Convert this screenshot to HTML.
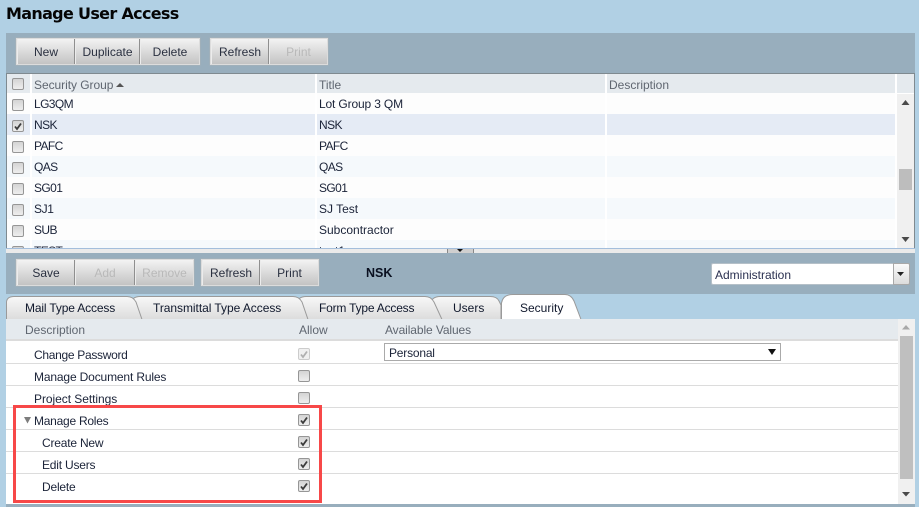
<!DOCTYPE html>
<html><head><meta charset="utf-8">
<style>
html,body{margin:0;padding:0}
body{width:919px;height:507px;overflow:hidden;background:#b1d0e4;position:relative;font-family:"Liberation Sans",sans-serif;font-size:12px;color:#1b2338}
.a{position:absolute}
.t{position:absolute;white-space:nowrap;line-height:14px}
.c{letter-spacing:-.6px}
.l{letter-spacing:-.2px}
.h{color:#5f6670}
.btn{position:absolute;height:25px;top:0;background:linear-gradient(#f3f3f3,#c3c3c3);border-left:1px solid #ececec;box-sizing:border-box;text-align:center;line-height:26px;color:#2a3040}
.dis{color:#b9b9b9}
.grp{position:absolute;background:#8f8f8f;padding:0;height:27px;border:1px solid #dcdcdc;box-sizing:border-box;box-shadow:0 0 0 .5px #a8b2b8}
.cb{position:absolute;width:12px;height:12px;box-sizing:border-box;border:1px solid #969696;border-radius:2px;background:linear-gradient(#d4d4d4,#eeeeee)}
.cb svg{position:absolute;left:0;top:0}
.sep{position:absolute;left:6px;width:892px;height:1px;background:#dcdcdc}
</style></head><body>
<div class="t" style="left:6px;top:5px;font:bold 16px/18px 'DejaVu Sans',sans-serif;letter-spacing:-.68px;color:#050505">Manage User Access</div>

<div class="a" style="left:6px;top:33px;width:909px;height:40px;background:#98aebd"></div>
<div class="grp" style="left:16px;top:38px;width:184px"><div class="btn" style="left:0;width:57px">New</div><div class="btn" style="left:58px;width:64px">Duplicate</div><div class="btn" style="left:123px;width:59px">Delete</div></div>
<div class="grp" style="left:210px;top:38px;width:118px"><div class="btn" style="left:0;width:57px">Refresh</div><div class="btn dis" style="left:58px;width:58px">Print</div></div>

<!-- grid -->
<div class="a" style="left:6px;top:73px;width:909px;height:176px;background:#fff;border-top:1px solid #7f8a90;border-left:1px solid #7f8a90;border-right:1px solid #7f8a90;box-sizing:border-box;overflow:hidden">
<div class="a" style="left:0;top:0;width:23px;height:19px;background:#e5eaee"></div>
<div class="a" style="left:25px;top:0;width:283px;height:19px;background:#e5eaee"></div>
<div class="a" style="left:310px;top:0;width:288px;height:19px;background:#e5eaee"></div>
<div class="a" style="left:600px;top:0;width:288px;height:19px;background:#e5eaee"></div>
<div class="a" style="left:890px;top:0;width:17px;height:19px;background:#e5eaee"></div>
<div class="a" style="left:890px;top:20px;width:17px;height:155px;background:#f0f0f0"></div>
<div class="a" style="left:892px;top:95px;width:13px;height:21px;background:#bdbdbd"></div>
<svg class="a" style="left:894px;top:26px" width="10" height="6"><path d="M4.500 0L8.500 5H.5z" fill="#4a4a4a"/></svg>
<svg class="a" style="left:894px;top:163px" width="10" height="6"><path d="M.5 0H8.500L4.500 5z" fill="#4a4a4a"/></svg>
<!-- row bands -->
<svg class="a" style="left:0;top:19px" width="889" height="156">
<g fill="#fdfdfd"><rect width="23" height="21"/><rect x="25" width="283" height="21"/><rect x="310" width="288" height="21"/><rect x="600" width="288" height="21"/></g>
<g fill="#e5ebf5"><rect y="21" width="23" height="21"/><rect x="25" y="21" width="283" height="21"/><rect x="310" y="21" width="288" height="21"/><rect x="600" y="21" width="288" height="21"/></g>
<g fill="#fdfdfd"><rect y="42" width="23" height="21"/><rect x="25" y="42" width="283" height="21"/><rect x="310" y="42" width="288" height="21"/><rect x="600" y="42" width="288" height="21"/></g>
<g fill="#f5f9fc"><rect y="63" width="23" height="21"/><rect x="25" y="63" width="283" height="21"/><rect x="310" y="63" width="288" height="21"/><rect x="600" y="63" width="288" height="21"/></g>
<g fill="#fdfdfd"><rect y="84" width="23" height="21"/><rect x="25" y="84" width="283" height="21"/><rect x="310" y="84" width="288" height="21"/><rect x="600" y="84" width="288" height="21"/></g>
<g fill="#f5f9fc"><rect y="105" width="23" height="21"/><rect x="25" y="105" width="283" height="21"/><rect x="310" y="105" width="288" height="21"/><rect x="600" y="105" width="288" height="21"/></g>
<g fill="#fdfdfd"><rect y="126" width="23" height="21"/><rect x="25" y="126" width="283" height="21"/><rect x="310" y="126" width="288" height="21"/><rect x="600" y="126" width="288" height="21"/></g>
<g fill="#f5f9fc"><rect y="147" width="23" height="9"/><rect x="25" y="147" width="283" height="9"/><rect x="310" y="147" width="288" height="9"/><rect x="600" y="147" width="288" height="9"/></g>
</svg>
<div class="t h" style="left:27px;top:4px;letter-spacing:-.05px">Security Group</div>
<svg class="a" style="left:109px;top:9px" width="9" height="5"><path d="M4 0L8 4H0z" fill="#555"/></svg>
<div class="t h" style="left:312px;top:4px">Title</div>
<div class="t h" style="left:602px;top:4px">Description</div>
<div class="t c" style="left:27px;top:23px">LG3QM</div><div class="t" style="left:312px;top:23px;letter-spacing:-.15px">Lot Group 3 QM</div>
<div class="t c" style="left:27px;top:44px">NSK</div><div class="t c" style="left:312px;top:44px">NSK</div>
<div class="t c" style="left:27px;top:65px">PAFC</div><div class="t c" style="left:312px;top:65px">PAFC</div>
<div class="t c" style="left:27px;top:86px">QAS</div><div class="t c" style="left:312px;top:86px">QAS</div>
<div class="t c" style="left:27px;top:107px">SG01</div><div class="t c" style="left:312px;top:107px">SG01</div>
<div class="t" style="left:27px;top:128px;letter-spacing:-.4px">SJ1</div><div class="t" style="left:312px;top:128px">SJ Test</div>
<div class="t c" style="left:27px;top:149px">SUB</div><div class="t" style="left:312px;top:149px">Subcontractor</div>
<div class="t c" style="left:27px;top:170px">TEST</div><div class="t" style="left:312px;top:170px">test1</div>
<div class="cb" style="left:5px;top:4px"></div>
<div class="cb" style="left:5px;top:25px"></div>
<div class="cb" style="left:5px;top:46px"><svg width="10" height="10"><path d="M2 5.500L4 8L8 2.500" fill="none" stroke="#3c3c3c" stroke-width="1.800"/></svg></div>
<div class="cb" style="left:5px;top:67px"></div>
<div class="cb" style="left:5px;top:88px"></div>
<div class="cb" style="left:5px;top:109px"></div>
<div class="cb" style="left:5px;top:130px"></div>
<div class="cb" style="left:5px;top:151px"></div>
<div class="cb" style="left:5px;top:172px"></div>
</div>
<div class="a" style="left:6px;top:248px;width:909px;height:1px;background:#a3bedc"></div>
<div class="a" style="left:6px;top:249px;width:909px;height:4px;background:#eaeaea"></div>
<div class="a" style="left:447px;top:249px;width:27px;height:4px;background:#cfcfcf;border-left:1px solid #888;border-right:1px solid #888;box-sizing:border-box"></div>
<svg class="a" style="left:457px;top:249px" width="7" height="3"><path d="M0 0H6L3 3z" fill="#111"/></svg>

<!-- second toolbar -->
<div class="a" style="left:6px;top:253px;width:909px;height:41px;background:#98aebd"></div>
<div class="grp" style="left:16px;top:259px;width:178px"><div class="btn" style="left:0;width:57px;line-height:27px">Save</div><div class="btn dis" style="left:58px;width:59px;line-height:27px">Add</div><div class="btn dis" style="left:118px;width:58px;line-height:27px">Remove</div></div>
<div class="grp" style="left:201px;top:259px;width:118px"><div class="btn" style="left:0;width:57px;line-height:27px">Refresh</div><div class="btn" style="left:58px;width:58px;line-height:27px">Print</div></div>
<div class="t" style="left:366px;top:266px;font-weight:bold;color:#0a1020;font-size:12.500px">NSK</div>
<div class="a" style="left:711px;top:263px;width:183px;height:22px;background:#fff;border:1px solid #b5c0c8;border-right:0;box-sizing:border-box;border-radius:2px 0 0 2px"></div>
<div class="t" style="left:715px;top:268px;color:#2a3050">Administration</div>
<div class="a" style="left:893px;top:263px;width:17px;height:22px;background:linear-gradient(#fafafa,#dcdcdc);border:1px solid #a8a8a8;box-sizing:border-box;border-radius:0 2px 2px 0"></div>
<svg class="a" style="left:897px;top:272px" width="8" height="5"><path d="M0 0H7L3.500 4z" fill="#222"/></svg>

<!-- tabs -->
<svg class="a" style="left:0;top:292px" width="600" height="28">
<defs><linearGradient id="g" x1="0" y1="0" x2="0" y2="1"><stop offset="0" stop-color="#f8f8f8"/><stop offset="1" stop-color="#dcdcdc"/></linearGradient></defs>
<path d="M430 27.500V12Q432 4.500 440 4.500H490Q497 4.500 499 9L501 13V27.500z" fill="url(#g)" stroke="#9a9a9a"/>
<path d="M296 27.500V12Q298 4.500 306 4.500H425Q431 4.500 434 10L442 27.500z" fill="url(#g)" stroke="#9a9a9a"/>
<path d="M130 27.500V12Q132 4.500 140 4.500H293Q299 4.500 302 10L308 27.500z" fill="url(#g)" stroke="#9a9a9a"/>
<path d="M6.500 27.500V10Q7 4.500 14 4.500H127Q133 4.500 136 10L142 27.500z" fill="url(#g)" stroke="#9a9a9a"/>
<path d="M501.500 27.500V11Q503 2.500 513 2.500H565Q571 2.500 574 9L581 27.500z" fill="#fff" stroke="#9a9a9a"/>
</svg>
<div class="t" style="left:25px;top:301px;color:#10182c;letter-spacing:-.15px">Mail Type Access</div>
<div class="t" style="left:153px;top:301px;color:#10182c;letter-spacing:-.05px">Transmittal Type Access</div>
<div class="t" style="left:319px;top:301px;color:#10182c;letter-spacing:-.2px">Form Type Access</div>
<div class="t" style="left:453px;top:301px;color:#10182c">Users</div>
<div class="t" style="left:520px;top:301px;color:#10182c">Security</div>

<!-- lower pane -->
<div class="a" style="left:6px;top:319px;width:892px;height:185px;background:#fff"></div>
<div class="a" style="left:6px;top:319px;width:892px;height:20px;background:#e5eaee"></div>
<div class="a" style="left:6px;top:339px;width:892px;height:2px;background:#dcdcdc"></div>
<div class="a" style="left:898px;top:319px;width:17px;height:185px;background:#f0f0f0"></div>
<div class="a" style="left:900px;top:336px;width:13px;height:143px;background:#bfbfbf"></div>
<svg class="a" style="left:902px;top:325px" width="10" height="6"><path d="M4 0L8 4.500H0z" fill="#a8a8a8"/></svg>
<svg class="a" style="left:902px;top:492px" width="10" height="6"><path d="M0 0H8L4 4.500z" fill="#4a4a4a"/></svg>
<div class="a" style="left:6px;top:504px;width:909px;height:3px;background:#98aebd"></div>
<div class="t h" style="left:25px;top:323px">Description</div>
<div class="t h" style="left:299px;top:323px">Allow</div>
<div class="t h" style="left:385px;top:323px;letter-spacing:-.1px">Available Values</div>

<div class="sep" style="top:363px"></div><div class="sep" style="top:385px"></div><div class="sep" style="top:407px"></div><div class="sep" style="top:429px"></div><div class="sep" style="top:451px"></div><div class="sep" style="top:473px"></div>

<div class="t" style="left:34px;top:348px;letter-spacing:-.3px">Change Password</div>
<div class="t l" style="left:34px;top:370px;letter-spacing:-.15px">Manage Document Rules</div>
<div class="t l" style="left:34px;top:392px;letter-spacing:-.05px">Project Settings</div>
<svg class="a" style="left:24px;top:417px" width="9" height="8"><path d="M0 0H7L3.500 6.500z" fill="#7d7d7d"/></svg>
<div class="t l" style="left:34px;top:414px;letter-spacing:-.25px">Manage Roles</div>
<div class="t l" style="left:42px;top:436px">Create New</div>
<div class="t l" style="left:42px;top:458px">Edit Users</div>
<div class="t l" style="left:42px;top:480px">Delete</div>

<div class="cb" style="left:298px;top:348px;border-color:#ccc;background:#f0f0f0"><svg width="10" height="10"><path d="M2 5.500L4 8L8 2.500" fill="none" stroke="#b0b0b0" stroke-width="1.800"/></svg></div>
<div class="cb" style="left:298px;top:370px"></div>
<div class="cb" style="left:298px;top:392px"></div>
<div class="cb" style="left:298px;top:414px"><svg width="10" height="10"><path d="M2 5.500L4 8L8 2.500" fill="none" stroke="#3c3c3c" stroke-width="1.800"/></svg></div>
<div class="cb" style="left:298px;top:436px"><svg width="10" height="10"><path d="M2 5.500L4 8L8 2.500" fill="none" stroke="#3c3c3c" stroke-width="1.800"/></svg></div>
<div class="cb" style="left:298px;top:458px"><svg width="10" height="10"><path d="M2 5.500L4 8L8 2.500" fill="none" stroke="#3c3c3c" stroke-width="1.800"/></svg></div>
<div class="cb" style="left:298px;top:480px"><svg width="10" height="10"><path d="M2 5.500L4 8L8 2.500" fill="none" stroke="#3c3c3c" stroke-width="1.800"/></svg></div>

<div class="a" style="left:384px;top:343px;width:397px;height:18px;background:#fff;border:1px solid #aaa;box-sizing:border-box"></div>
<div class="t l" style="left:389px;top:346px">Personal</div>
<svg class="a" style="left:768px;top:349px" width="10" height="7"><path d="M0 0H8L4 6z" fill="#111"/></svg>

<div class="a" style="left:13px;top:405px;width:309px;height:98px;border:3px solid #f74848;box-sizing:border-box"></div>
</body></html>
